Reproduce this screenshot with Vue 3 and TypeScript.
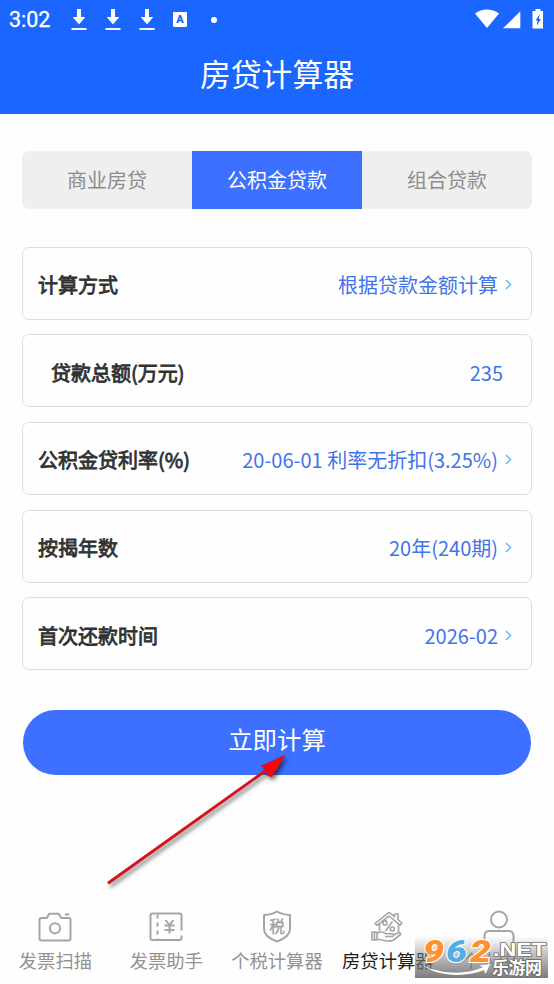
<script setup lang="ts">
import { ref } from 'vue'

interface Field {
  label: string
  value: string
  input?: boolean
}

interface NavItem {
  label: string
  icon: 'camera' | 'ticket' | 'tax' | 'house' | 'user'
}

const tabs: string[] = ['商业房贷', '公积金贷款', '组合贷款']
const activeTab = ref(1)

const fields: Field[] = [
  { label: '计算方式', value: '根据贷款金额计算' },
  { label: '贷款总额(万元)', value: '235', input: true },
  { label: '公积金贷利率(%)', value: '20-06-01 利率无折扣(3.25%)' },
  { label: '按揭年数', value: '20年(240期)' },
  { label: '首次还款时间', value: '2026-02' },
]

const navItems: NavItem[] = [
  { label: '发票扫描', icon: 'camera' },
  { label: '发票助手', icon: 'ticket' },
  { label: '个税计算器', icon: 'tax' },
  { label: '房贷计算器', icon: 'house' },
  { label: '个人中心', icon: 'user' },
]
const activeNav = ref(3)
</script>

<template>
  <div class="screen">
    <header class="header">
      <div class="status">
        <span class="clock">3:02</span>
        <svg v-for="n in 3" :key="n" class="download" viewBox="0 0 16 22">
          <path d="M6 0h4v8h4.300L8 15.500 1.700 8H6zM.5 19h15v2H.5z" fill="#fff" />
        </svg>
        <span class="ime">A</span>
        <span class="dot"></span>
        <svg class="signals" viewBox="0 0 70 22">
          <path d="M0 4.500C7-.8 17-.8 24 4.500L12 19z" fill="#fff" />
          <path d="M28 19.300 45.300 2.300v17z" fill="#fff" />
          <path d="M60.500 0h5v2H68v17.500H57.500V2h3z" fill="#fff" />
          <path d="m64.800 5-4.300 6.500h2.100l-.8 5.200 4-6.600h-2z" fill="#1b66ff" />
        </svg>
      </div>
      <h1 class="title">房贷计算器</h1>
    </header>

    <main class="content">
      <div class="tabs">
        <button
          v-for="(tab, i) in tabs"
          :key="tab"
          class="tab"
          :class="{ active: i === activeTab }"
          @click="activeTab = i"
        >{{ tab }}</button>
      </div>

      <div class="fields">
        <div v-for="f in fields" :key="f.label" class="field" :class="{ input: f.input }">
          <span class="label">{{ f.label }}</span>
          <span class="value">{{ f.value }}</span>
          <svg v-if="!f.input" class="chevron" viewBox="0 0 7 11">
            <path d="m1 1 4.600 4.500L1 10" fill="none" stroke="#4db2f5" stroke-width="1.300" />
          </svg>
        </div>
      </div>

      <button class="submit">立即计算</button>
    </main>

    <nav class="nav">
      <a
        v-for="(item, i) in navItems"
        :key="item.label"
        class="nav-item"
        :class="{ active: i === activeNav }"
        @click="activeNav = i"
      >
        <svg class="icon" viewBox="0 0 36 36" fill="none" stroke="#a5a5a5" stroke-width="2" stroke-linejoin="round">
          <template v-if="item.icon === 'camera'">
            <path d="M4.500 9h5.200l2.500-4.200h9.600l2.500 4.200h7.200q2 0 2 2v18.500q0 2-2 2h-27q-2 0-2-2V11q0-2 2-2z" />
            <circle cx="18" cy="19.300" r="5.100" />
            <path d="M27.800 5.500h4.400" />
          </template>
          <template v-else-if="item.icon === 'ticket'">
            <path d="M33.500 21.500v-15q0-2-2-2h-27q-2 0-2 2V29q0 2 2 2h27q2 0 2-2v-2.500" />
            <path d="M9.500 5.500v25" stroke-dasharray="4 4" />
            <path d="m17.500 11 4 5 4-5M16.500 16.500h10M16.500 21h10M21.500 16v8.500" />
          </template>
          <template v-else-if="item.icon === 'tax'">
            <path d="M18 2.500c4 2.500 8.500 3.200 13 3.400V20c0 6.300-6 10-13 12.500C11 30 5 26.300 5 20V5.900c4.500-.2 9-.9 13-3.400z" />
            <text x="18" y="23" class="tax-glyph">税</text>
          </template>
          <template v-else-if="item.icon === 'house'">
            <g stroke-width="1.600">
              <path d="M5 14.500 19 3.300 24.500 7.700V5h3.500v5.500l4 3.500-2 2.200L19 7 7 16.300z" />
              <path d="M9.500 14.500v7.500M28.500 15.300V23.500" />
              <path d="m22.500 12.500-7 9.500" />
              <circle cx="15" cy="13.900" r="2" />
              <circle cx="22.300" cy="20" r="2" />
              <path d="M2 23h5v8H2zM4.500 23v8" />
              <path d="M7.500 24c4-2 7-.8 9 .8h6q2.500 1.500 0 2.700h-7.500" />
              <path d="M23.500 26 28 24q3-.7 2.500 1.500l-7 5.500q-3 1.500-6 1L7.500 30.300" />
            </g>
          </template>
          <template v-else>
            <circle cx="18" cy="10.500" r="8" />
            <path d="M3.500 36v-9q0-5 5-5h19q5 0 5 5v9" />
          </template>
        </svg>
        <span class="nav-label">{{ item.label }}</span>
      </a>
    </nav>

    <svg class="pointer" viewBox="0 0 190 140">
      <g class="pointer-shape">
        <path d="M4 132.500 163 19" stroke="#d4141b" stroke-width="3" stroke-linecap="round" />
        <path d="M180 5.500 156.500 16l4.500 3 1.500 6.500 4.500 1z" fill="#fc0508" stroke="#c7131c" stroke-width=".8" />
      </g>
    </svg>

    <svg class="watermark" viewBox="0 0 133 42">
      <defs>
        <linearGradient id="shade" x1="0" y1="0" x2="0" y2="1">
          <stop offset="0" stop-color="#888" stop-opacity="0" />
          <stop offset=".45" stop-color="#808080" stop-opacity=".5" />
          <stop offset="1" stop-color="#707070" stop-opacity=".92" />
        </linearGradient>
      </defs>
      <rect width="133" height="42" fill="url(#shade)" />
      <path d="M8 29.500c18 9 44 9.500 60 1.500l-3.500-1.500L75 28l-4.500 10-1.500-4c-20 8-47 6-61-4.500z" fill="#fff" />
      <g class="digits">
        <text x="8" y="26" textLength="21" lengthAdjust="spacingAndGlyphs" fill="#ff922b">9</text>
        <text x="31" y="26" textLength="21" lengthAdjust="spacingAndGlyphs" fill="#51aee5">6</text>
        <text x="55" y="26" textLength="21" lengthAdjust="spacingAndGlyphs" fill="#ff922b">2</text>
      </g>
      <text x="78" y="19.500" class="domain" textLength="53" lengthAdjust="spacingAndGlyphs">.NET</text>
      <text x="77" y="37.500" class="site" textLength="50">乐游网</text>
    </svg>
  </div>
</template>

<style>
body {
  margin: 0;
  background: #fff;
}
</style>

<style scoped>
.screen {
  position: relative;
  display: flex;
  flex-direction: column;
  width: 554px;
  height: 984px;
  overflow: hidden;
  background: #fefefe;
  font-family: 'Noto Sans CJK SC', sans-serif;
}
button {
  border: 0;
  padding: 0;
  font-family: inherit;
}
.header {
  height: 114px;
  background: #1b66ff;
  color: #fff;
}
.status {
  display: flex;
  align-items: center;
  box-sizing: border-box;
  height: 38px;
  padding: 1px 9px 0;
}
.clock {
  width: 62px;
  font: 400 21.500px/38px Roboto, sans-serif;
  -webkit-text-stroke: 0.3px #fff;
}
.download {
  width: 16px;
  height: 22px;
  margin-right: 18px;
}
.ime {
  width: 14px;
  height: 15px;
  border-radius: 1px;
  background: #fff;
  color: #1b66ff;
  text-align: center;
  font: 900 11px/15px Roboto, sans-serif;
}
.dot {
  width: 6px;
  height: 6px;
  margin-left: 24px;
  border-radius: 50%;
  background: #fff;
}
.signals {
  width: 70px;
  height: 22px;
  margin: 0 0 0 auto;
}
.title {
  margin: 0;
  text-align: center;
  font-weight: 400;
  font-size: 30.800px;
  line-height: 70px;
}
.content {
  flex: 1;
  padding: 37px 22px 0;
}
.tabs {
  display: grid;
  grid-template-columns: repeat(3, 1fr);
  height: 58px;
  overflow: hidden;
  border-radius: 7px;
  background: #efefef;
}
.tab {
  padding-bottom: 2px;
  background: none;
  color: #8c8c8c;
  font-size: 20px;
}
.tab.active {
  background: #3d70ff;
  color: #fff;
}
.fields {
  display: grid;
  gap: 14.700px;
  margin-top: 37.500px;
}
.field {
  display: flex;
  align-items: center;
  box-sizing: border-box;
  height: 73px;
  padding: 3px 19px 0 15px;
  border: 1.500px solid #dedede;
  border-radius: 7px;
  font-size: 20px;
}
.field.input {
  padding: 3px 28px 0 28px;
}
.label {
  color: #303133;
  -webkit-text-stroke: 0.8px #303133;
}
.value {
  margin-left: auto;
  color: #4274e8;
}
.chevron {
  width: 7px;
  height: 11px;
  margin-left: 7px;
}
.submit {
  display: block;
  width: 508px;
  height: 65px;
  margin: 40px auto 0;
  padding-bottom: 8px;
  border-radius: 33px;
  background: #3d70ff;
  color: #fff;
  font-size: 24.400px;
}
.nav {
  display: grid;
  grid-template-columns: repeat(5, 1fr);
  height: 75px;
}
.nav-item {
  display: flex;
  flex-direction: column;
  align-items: center;
  color: #929292;
  font-size: 18.300px;
  line-height: 28px;
  white-space: nowrap;
}
.nav-item.active {
  color: #1d1d1d;
}
.icon {
  width: 36px;
  height: 36px;
}
.nav-label {
  margin-top: 1px;
}
.tax-glyph {
  fill: #a0a0a0;
  stroke: #a0a0a0;
  stroke-width: 0.4px;
  font-size: 15.500px;
  text-anchor: middle;
}
.pointer {
  position: absolute;
  left: 105px;
  top: 750px;
  width: 190px;
  height: 140px;
}
.pointer-shape {
  filter: drop-shadow(2px 3px 2px rgba(0, 0, 0, 0.55));
}
.watermark {
  position: absolute;
  left: 415px;
  top: 936px;
  width: 133px;
  height: 42px;
}
.digits {
  font: italic 900 32px Roboto, sans-serif;
  stroke: #fff;
  stroke-width: 2px;
  paint-order: stroke;
}
.domain {
  fill: #fff;
  stroke: #777;
  stroke-width: 1.500px;
  paint-order: stroke;
  font: 700 18px 'Liberation Sans', sans-serif;
}
.site {
  fill: #fff;
  stroke: #666;
  stroke-width: 1.500px;
  paint-order: stroke;
  font-weight: 700;
  font-size: 17px;
}
</style>
